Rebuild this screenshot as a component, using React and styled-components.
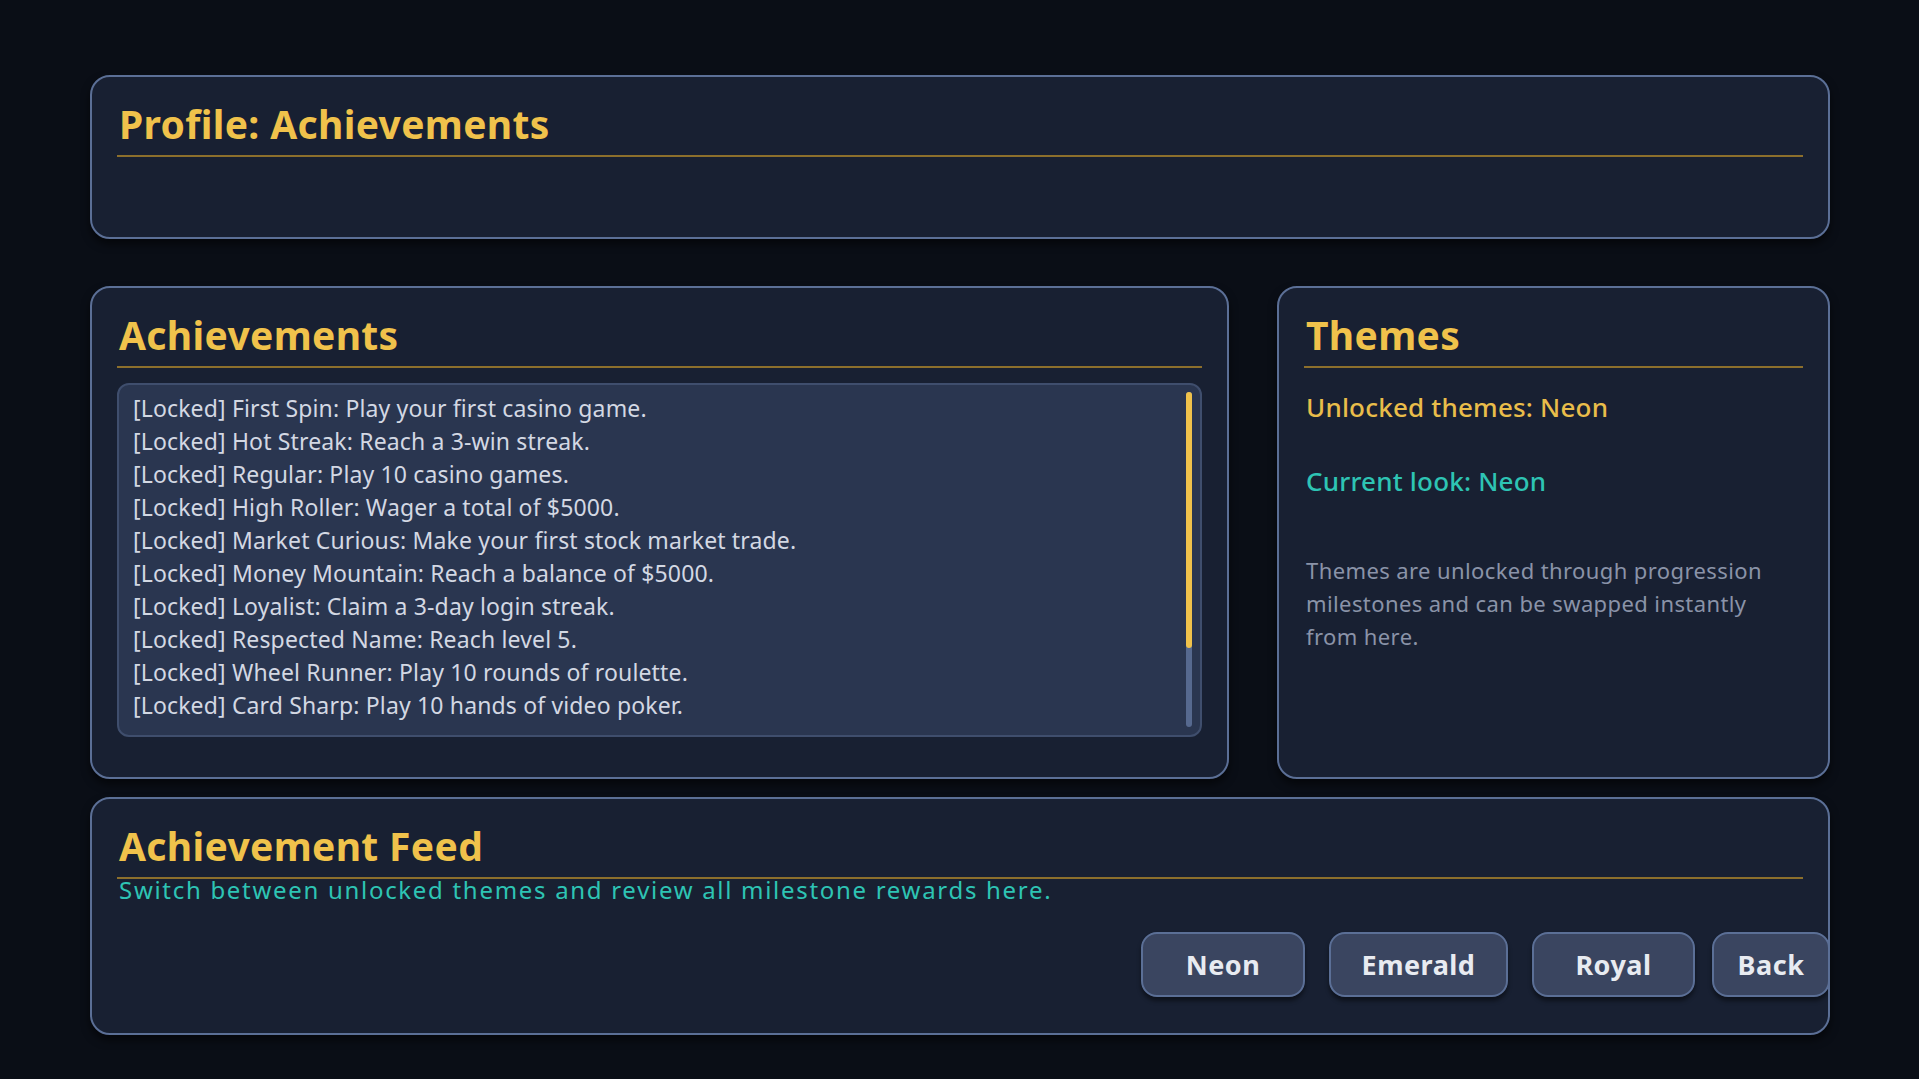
import styled, { createGlobalStyle } from "styled-components";

const GlobalStyle = createGlobalStyle`
  html, body {
    margin: 0;
    padding: 0;
    background: #0a0e16;
  }
  body {
    font-family: "Noto Sans", "Open Sans", sans-serif;
  }
`;

const Page = styled.div`
  width: 1919px;
  height: 1079px;
  box-sizing: border-box;
  padding: 75px 89px 0 90px;
  display: flex;
  flex-direction: column;
  background: #0a0e16;
`;

const Panel = styled.section`
  box-sizing: border-box;
  background: #182032;
  border: 2px solid #5b6f96;
  border-radius: 20px;
  padding: 21px 25px 0 25px;
  box-shadow: 0 5px 8px rgba(0, 0, 0, 0.55);
  height: ${(p) => p.$height}px;
  width: ${(p) => (p.$width ? `${p.$width}px` : "auto")};
  overflow: hidden;
`;

const Heading = styled.h2`
  margin: 0;
  padding: 2px 0 7px 2px;
  font-size: 39px;
  line-height: 48px;
  font-weight: 700;
  letter-spacing: 0.35px;
  color: #f0c24b;
  border-bottom: 2px solid #8c6f2c;
`;

const MiddleRow = styled.div`
  display: flex;
  gap: 48px;
  margin: 47px 0 18px;
`;

const ListBox = styled.div`
  box-sizing: border-box;
  height: 354px;
  margin-top: 15px;
  background: #2a3650;
  border: 2px solid #3f4e6d;
  border-radius: 12px;
  padding: 7px 30px 0 14px;
  position: relative;
`;

const ListItem = styled.div`
  font-size: 23px;
  line-height: 33px;
  letter-spacing: 0.15px;
  color: #d3d8e3;
  white-space: nowrap;
`;

const ScrollTrack = styled.div`
  position: absolute;
  right: 8px;
  top: 7px;
  bottom: 8px;
  width: 6px;
  border-radius: 3px;
  background: #56698f;
`;

const ScrollThumb = styled.div`
  width: 100%;
  height: 256px;
  border-radius: 3px;
  background: #f0c24b;
`;

const InfoLine = styled.p`
  margin: ${(p) => p.$top}px 0 0 2px;
  font-size: 26px;
  line-height: 32px;
  font-weight: 500;
  letter-spacing: 0.2px;
  color: ${(p) => p.$color};
`;

const Description = styled.p`
  margin: 57px 0 0 2px;
  font-size: 22px;
  line-height: 33px;
  color: #8a93a8;
  letter-spacing: 0.4px;
`;

const SubText = styled.p`
  margin: -1px 0 0 2px;
  font-size: 24px;
  line-height: 24px;
  color: #2ec4b4;
  letter-spacing: 1.7px;
`;

const ButtonRow = styled.div`
  display: flex;
  justify-content: flex-end;
  gap: 24px;
  margin: 30px -27px 0 0;
`;

const Button = styled.button`
  box-sizing: border-box;
  width: ${(p) => p.$w}px;
  height: 65px;
  margin-left: ${(p) => p.$ml || 0}px;
  background: #3a4560;
  border: 2px solid #5b6f96;
  border-radius: 16px;
  box-shadow: 0 4px 4px rgba(0, 0, 0, 0.45);
  color: #e8ebf1;
  font-family: "Noto Sans", "Open Sans", sans-serif;
  font-size: 27px;
  font-weight: 700;
  letter-spacing: 0.5px;
  cursor: pointer;
`;

const achievements = [
  "First Spin: Play your first casino game.",
  "Hot Streak: Reach a 3-win streak.",
  "Regular: Play 10 casino games.",
  "High Roller: Wager a total of $5000.",
  "Market Curious: Make your first stock market trade.",
  "Money Mountain: Reach a balance of $5000.",
  "Loyalist: Claim a 3-day login streak.",
  "Respected Name: Reach level 5.",
  "Wheel Runner: Play 10 rounds of roulette.",
  "Card Sharp: Play 10 hands of video poker.",
];

export default function App() {
  return (
    <>
      <GlobalStyle />
      <Page>
        <Panel $height={164}>
          <Heading>Profile: Achievements</Heading>
        </Panel>

        <MiddleRow>
          <Panel $height={493} $width={1139}>
            <Heading>Achievements</Heading>
            <ListBox>
              {achievements.map((a) => (
                <ListItem key={a}>[Locked] {a}</ListItem>
              ))}
              <ScrollTrack>
                <ScrollThumb />
              </ScrollTrack>
            </ListBox>
          </Panel>
          <Panel $height={493} $width={553}>
            <Heading>Themes</Heading>
            <InfoLine $top={23} $color="#e9bd4a">Unlocked themes: Neon</InfoLine>
            <InfoLine $top={42} $color="#2ec4b4">Current look: Neon</InfoLine>
            <Description>
              Themes are unlocked through progression milestones and can be
              swapped instantly from here.
            </Description>
          </Panel>
        </MiddleRow>

        <Panel $height={238}>
          <Heading>Achievement Feed</Heading>
          <SubText>
            Switch between unlocked themes and review all milestone rewards here.
          </SubText>
          <ButtonRow>
            <Button $w={164}>Neon</Button>
            <Button $w={179}>Emerald</Button>
            <Button $w={163}>Royal</Button>
            <Button $w={118} $ml={-7}>Back</Button>
          </ButtonRow>
        </Panel>
      </Page>
    </>
  );
}
